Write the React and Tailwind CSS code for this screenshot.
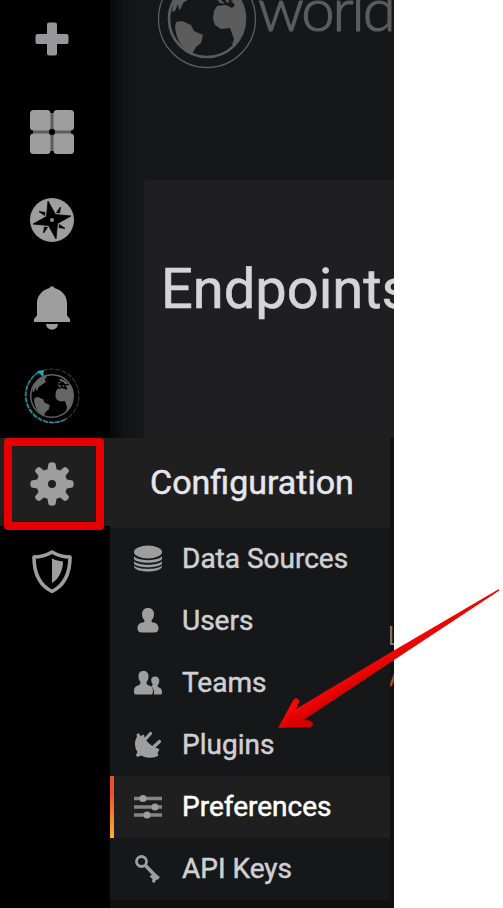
const items = [
  { label: 'Data Sources', icon: 'data' },
  { label: 'Users', icon: 'user' },
  { label: 'Teams', icon: 'team' },
  { label: 'Plugins', icon: 'plug' },
  { label: 'Preferences', icon: 'prefs', active: true },
  { label: 'API Keys', icon: 'key' },
];

function PlusIcon() {
  return (
    <svg className="mb-[10px]" width="34" height="34" viewBox="0 0 34 34" fill="#969798">
      <rect x="12" y="0.5" width="10" height="33" rx="2" />
      <rect x="0.5" y="12" width="33" height="10" rx="2" />
    </svg>
  );
}

function GridIcon() {
  return (
    <svg width="44" height="44" viewBox="0 0 44 44">
      <rect x="3" y="3" width="38" height="38" fill="#5e5e5e" />
      <circle cx="22" cy="22" r="3" fill="#000" />
      <g fill="#9e9e9e">
        <rect width="20.5" height="20.5" rx="3.5" />
        <rect x="23.5" width="20.5" height="20.5" rx="3.5" />
        <rect y="23.5" width="20.5" height="20.5" rx="3.5" />
        <rect x="23.5" y="23.5" width="20.5" height="20.5" rx="3.5" />
      </g>
    </svg>
  );
}

function CompassIcon() {
  return (
    <svg width="44" height="44" viewBox="0 0 44 44">
      <circle cx="22" cy="22" r="22" fill="#9e9e9e" />
      <path
        d="M18 3 25.500 16.500 41 18 27.500 25.500 26 41 18.500 27.500 3 26 16.500 18.500Z"
        fill="#000"
        stroke="#000"
        strokeWidth=".8"
      />
      <path
        d="M26.500 14.500 30.500 9 29.500 15ZM29.500 26.500 35 30.500 29 29.500ZM17.500 29.500 13.500 35 14.500 29ZM14.500 17.500 9 13.500 15 14.500Z"
        fill="#000"
        stroke="#000"
        strokeWidth=".8"
      />
      <circle cx="22" cy="22" r="2" fill="#8e8e8e" />
    </svg>
  );
}

function BellIcon() {
  return (
    <svg width="36" height="44" viewBox="0 0 36 44" fill="#9e9e9e">
      <path d="M15.5 2a2.7 2.700 0 0 1 5 0C28 4 33 10 33 17v12.500l3 3.500v3H0v-3l3-3.500V17C3 10 8 4 15.500 2Z" />
      <path d="M12 38h12c-.8 7.500-11.200 7.500-12 0Z" />
    </svg>
  );
}

function Continents() {
  return (
    <g>
      <path d="M-34 -14C-30 -27 -22 -34 -12 -37L-9 -34-13 -30-11 -25-18 -20 -24 -16-26 -11-28 -9 -29 -15-32 -8-35 -7Z" />
      <path d="M-31 3-25 2-16 6-13 12-4 16-6 24-11 28-15 35C-26 29-31 19-32 8Z" />
      <path d="M10 -13 19 -14 25 -11 28 -14 24 -18 29 -20 34 -18C38 -9 39 2 36 12 34 20 30 26 25 26L27 20 23 9 14 10 8 6 6 0 7 -8Z" />
      <path d="M9 -21 14 -19 18 -15 13 -16ZM14 -31 22 -28 29 -22 24 -21 20 -25 14 -27ZM18 -20 23 -18 20 -16ZM11 -25 16 -24 12 -22Z" />
    </g>
  );
}

function SmallGlobe() {
  return (
    <svg width="56" height="56" viewBox="-28 -28 56 56">
      <g transform="scale(.56)" fill="#666">
        <Continents />
      </g>
      <circle r="21.300" fill="none" stroke="#626262" strokeWidth="1.500" />
      <circle r="27" fill="none" stroke="#383838" strokeWidth="1.100" strokeDasharray="5 1.500" />
      <path d="M-13 -24A27 27 0 0 0 15 22.500" fill="none" stroke="#2590a6" strokeWidth="1.500" strokeDasharray="5 1" />
      <path d="M-15 -25-8 -26-9 -19Z" fill="#2da3bb" />
    </svg>
  );
}

function GearIcon() {
  return (
    <svg width="44" height="44" viewBox="-22 -22 44 44" fill="#9e9e9e">
      <path
        fillRule="evenodd"
        d="M-3.500 -20.500Q0 -23 3.500 -20.500L4.500 -14.800 8 -13.400 12.500 -17Q16.500 -16.500 17 -12.500L13.400 -8 14.800 -4.500 20.500 -3.500Q23 0 20.500 3.500L14.800 4.500 13.400 8 17 12.500Q16.500 16.500 12.500 17L8 13.400 4.500 14.800 3.500 20.500Q0 23-3.500 20.500L-4.500 14.800-8 13.400-12.500 17Q-16.500 16.500-17 12.500L-13.400 8-14.800 4.500-20.500 3.500Q-23 0-20.500-3.500L-14.800-4.500-13.400-8-17-12.500Q-16.500-16.500-12.500-17L-8-13.400-4.500-14.800ZM-4 0a4 4 0 1 0 8 0a4 4 0 1 0-8 0Z"
      />
    </svg>
  );
}

function ShieldIcon() {
  return (
    <svg width="40" height="44" viewBox="0 0 40 44">
      <path
        d="M20 2C15 5 9 7 2 7 2 23 7 35 20 41.500 33 35 38 23 38 7 31 7 25 5 20 2Z"
        fill="none"
        stroke="#9e9e9e"
        strokeWidth="3.600"
        strokeLinejoin="round"
      />
      <path d="M20 8.500C24 10.500 27 11 31 11.500 31 20 27 29 20 33Z" fill="#9e9e9e" />
    </svg>
  );
}

function MenuIcon({ name }) {
  return (
    <svg width="28" height="28" viewBox="0 0 28 28" fill="#9e9e9e" className="shrink-0">
      {name === 'data' && (
        <>
          <ellipse cx="14" cy="7" rx="14" ry="6.500" />
          <path d="M0 11C3 16.500 25 16.500 28 11V14C25 19 3 19 0 14Z" />
          <path d="M0 16C3 21 25 21 28 16V18.500C25 23.500 3 23.500 0 18.500Z" />
          <path d="M0 20.500C3 25 25 25 28 20.500V22C25 28 3 28 0 22Z" />
        </>
      )}
      {name === 'user' && (
        <path d="M14 1c4 0 6 2.500 6 6.500 0 3-1.500 4.500-2.500 6 0 1.500.5 2 2 2 3.500.5 5 3 5 6 0 2.500-1.500 4-4 4h-13c-2.500 0-4-1.500-4-4 0-3 1.500-5.500 5-6 1.500 0 2-.5 2-2C9.500 12 8 10.500 8 7.500c0-4 2-6.500 6-6.500Z" />
      )}
      {name === 'team' && (
        <>
          <path d="M9.500 2c3.500 0 5 2 5 5.500 0 3-1 4-2 5.500 0 2 .5 3 2.500 3.500 2.500.7 4 2 4 5.500 0 3-1 3.500-2 3.500H2c-1.500 0-2-1-2-3 0-4 1.500-5.300 4-6 2-.5 2.500-1.500 2.500-3.500-1-1.500-2-2.500-2-5.500C4.500 4 6 2 9.500 2Z" />
          <path d="M21 7.500c3 0 4.300 2 4.300 4.500 0 2-1 3-1.700 4.500 0 1 .4 1.500 1.500 2 2 .8 2.900 2 2.900 4.500 0 2-.5 2.500-1.500 2.500H20c.5-4-1-7-3-8.500 1.500-.3 2-1 1.500-2-2-3-2-7.500 2.500-7.500Z" />
        </>
      )}
      {name === 'plug' && (
        <>
          <path d="M4.500 2 6.500 5 10 3.500C10 8 16 15 23 17L25.500 18.500 23.500 22 24.500 24.500C20 27.500 12 27.500 7.500 24.500L3 26 2 24 3.500 21C0 16 .5 9 3 6L2.500 3.500Z" />
          <path d="M11.500 8 16.500 2.500M19.500 16 25.500 10.500" stroke="#9e9e9e" strokeWidth="3.200" strokeLinecap="round" />
        </>
      )}
      {name === 'prefs' && (
        <>
          <path d="M0 5.500h28M0 14h28M0 22h28" stroke="#858585" strokeWidth="3.400" />
          <circle cx="9" cy="5.500" r="3.600" />
          <circle cx="21" cy="14" r="3.600" />
          <circle cx="13" cy="22" r="3.600" />
        </>
      )}
      {name === 'key' && (
        <>
          <circle cx="7.500" cy="6.500" r="5" fill="none" stroke="#9e9e9e" strokeWidth="2.800" />
          <path d="M11 10 23 22.500" stroke="#9e9e9e" strokeWidth="3.500" />
          <path d="M15.500 21.500 20 18l6 4-2 2.500-2 .5-1.500 3-2.500-1 .5-3Z" />
        </>
      )}
    </svg>
  );
}

function NavCell({ children, active }) {
  return (
    <div className={`flex h-[88px] w-[110px] shrink-0 items-center justify-center pt-1 pr-[6px] ${active ? 'bg-[#1f1f1f]' : ''}`}>
      {children}
    </div>
  );
}

export default function App() {
  return (
    <div className="relative h-[908px] w-[503px] overflow-hidden bg-white font-['Roboto',sans-serif]">
      <div className="flex h-full w-[394px] overflow-hidden bg-[#161719]">
        <nav className="-mt-[2px] flex h-[910px] w-[110px] shrink-0 flex-col bg-black">
          <NavCell><PlusIcon /></NavCell>
          <NavCell><GridIcon /></NavCell>
          <NavCell><CompassIcon /></NavCell>
          <NavCell><BellIcon /></NavCell>
          <NavCell><SmallGlobe /></NavCell>
          <NavCell active><GearIcon /></NavCell>
          <NavCell><ShieldIcon /></NavCell>
        </nav>
        <div className="w-[34px] shrink-0 bg-linear-to-r from-[#070808] via-[#111314] via-40% to-[#161719]" />
        <main className="flex w-[250px] shrink-0 flex-col">
          <header className="flex h-[180px] items-start overflow-hidden pl-[14px]">
            <svg className="shrink-0" width="100" height="70" viewBox="-49 -19 100 70">
              <circle r="48.500" fill="none" stroke="#5c5c5c" strokeWidth="1.400" />
              <circle r="38" fill="none" stroke="#5c5c5c" strokeWidth="2.600" />
              <g fill="#5c5c5c"><Continents /></g>
            </svg>
            <span className="-mt-[27px] whitespace-nowrap font-['Lato',sans-serif] text-[60px] leading-[70px] font-light tracking-[-2.2px] text-[#5c5c5c] [-webkit-text-stroke:1.2px_#5c5c5c]">world</span>
          </header>
          <section className="flex-1 rounded-tl-[4px] bg-[#1f1f21] pt-[74px] pl-[17px]">
            <h1 className="whitespace-nowrap text-[56px] leading-[70px] text-[#d5d5d8] [-webkit-text-stroke:0.6px_#d5d5d8]">Endpoints</h1>
          </section>
        </main>
      </div>

      <aside className="absolute top-[438px] left-[110px] flex h-[470px] w-[284px] bg-[#111111]">
        <div className="w-[280px] shrink-0">
          <h2 className="flex h-[90px] items-center bg-[#1f1f1f] pb-[2px] pl-[40px] text-[34px] text-[#e6e6ee] [-webkit-text-stroke:0.5px_#e6e6ee]">Configuration</h2>
          {items.map((item) => (
            <div
              key={item.label}
              className={`flex h-[62px] items-center ${item.active ? 'bg-[#1f1f1f] text-white' : 'bg-[#161719] text-[#cfd0d2]'}`}
            >
              <span className={`mr-5 h-full w-1 ${item.active ? 'bg-linear-to-b from-[#f05028] from-30% to-[#fbb02e]' : ''}`} />
              <MenuIcon name={item.icon} />
              <span className="ml-[20px] whitespace-nowrap text-[28px] [-webkit-text-stroke:0.5px_currentColor]">{item.label}</span>
            </div>
          ))}
        </div>
        <div className="flex w-1 flex-col overflow-hidden pt-[181px]">
          <span className="-ml-[2.5px] text-[26px] leading-[34px] text-[#777777]">L</span>
          <span className="mt-[9px] -ml-px text-[22px] leading-[34px] text-[#a94f14] [-webkit-text-stroke:0.5px_#a94f14]">A</span>
        </div>
      </aside>

      <div className="absolute top-[438px] left-[4px] h-[92px] w-[100px] rounded-[4px] border-8 border-[#e60000]" />

      <svg className="absolute top-[570px] left-[260px]" width="243" height="180" viewBox="260 570 243 180">
        <defs>
          <linearGradient id="arrow" gradientUnits="userSpaceOnUse" x1="340" y1="680" x2="347" y2="692">
            <stop offset="0" stopColor="#fa0505" />
            <stop offset="1" stopColor="#d60000" />
          </linearGradient>
        </defs>
        <path
          d="M278 728 293 700.500Q296 696 299 700.500L299 702 296 709 393 651 498.500 589.300Q499.500 589.500 499 590.700L394 660 303.500 720 310 720.500Q313 722 313 724 312.500 727 310 727Z"
          fill="url(#arrow)"
        />
      </svg>
    </div>
  );
}
